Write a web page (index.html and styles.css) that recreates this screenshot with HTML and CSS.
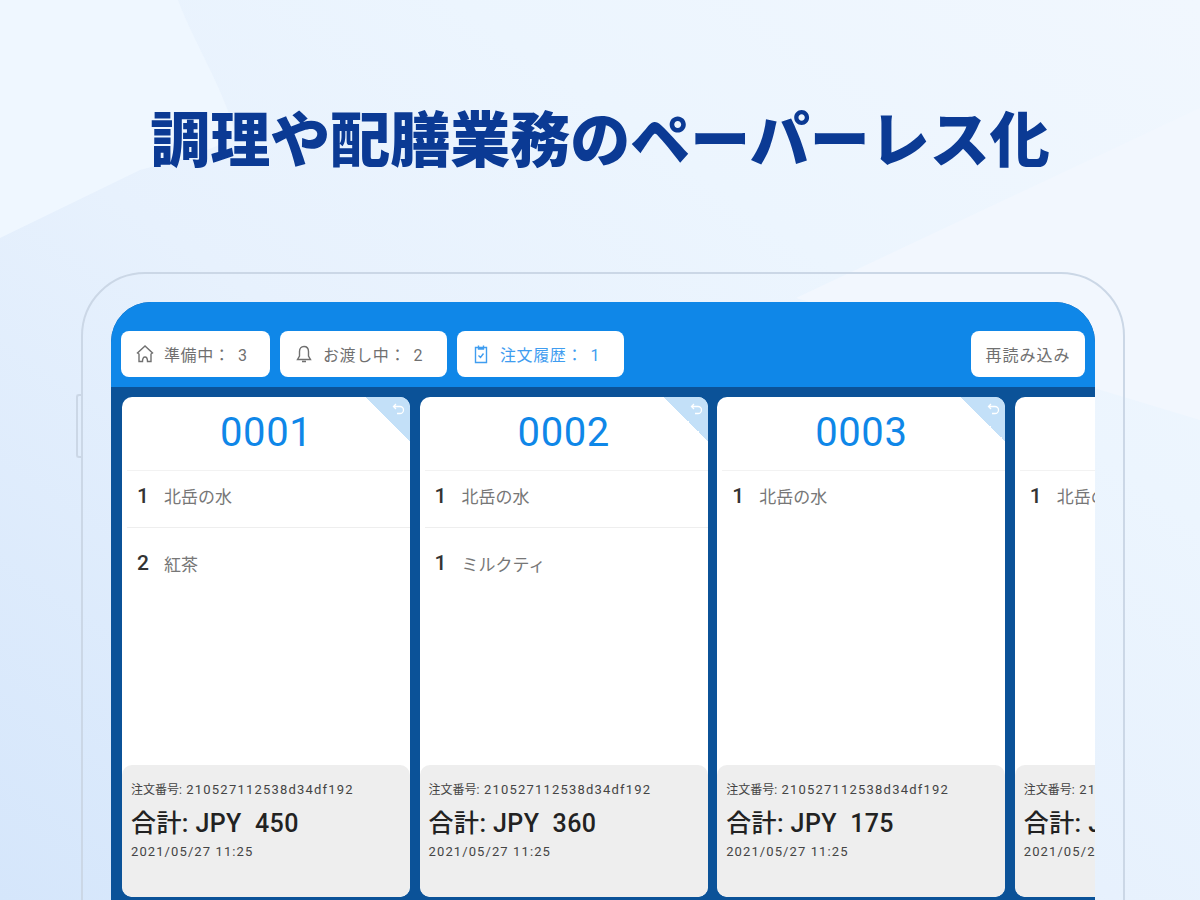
FILE: index.html
```html
<html lang="ja">
<head>
	<meta charset="utf-8">
	<link rel="stylesheet" href="styles.css">
</head>
<body>
	<svg class="backdrop" viewBox="0 0 1200 900" aria-hidden="true">
		<path d="M0 238 L140 170 C180 160 215 150 236 135 C222 85 195 45 178 0 L0 0 Z" fill="#eff7ff"/>
		<path d="M1200 108 L796 298 L1200 420 Z" fill="#f2f7fe"/>
	</svg>

	<h1 class="headline">調理や配膳業務のペーパーレス化</h1>

	<div class="tablet">
		<span class="side-button"></span>
		<div class="screen">
			<div class="toolbar">
				<button class="tab tab-prep">
					<svg class="tab-icon" viewBox="0 0 20 20"><path d="M10 2 2.500 9l1.500 1V17.500h3.500c0-3 1-4.500 2.500-4.500s2.500 1.500 2.500 4.500H16V10l1.500-1z"/></svg>
					<span>準備中： 3</span>
				</button>
				<button class="tab tab-hand">
					<svg class="tab-icon" viewBox="0 0 20 20"><path d="M10 2.500c-3 0-4.500 2.300-4.500 5v4.500L3.500 15.500h13l-2-3.500V7.500c0-2.700-1.500-5-4.500-5zM8 17.500h4"/></svg>
					<span>お渡し中： 2</span>
				</button>
				<button class="tab tab-history">
					<svg class="tab-icon" viewBox="0 0 20 20"><path d="M4.500 3.500h11v15h-11zM7.500 1.500v3.500h5V1.500M7.500 11.500l2 2 3-4"/></svg>
					<span>注文履歴： 1</span>
				</button>
				<button class="tab tab-reload">再読み込み</button>
			</div>

			<div class="board">
				<div class="order">
					<div class="order-no">0001</div>
					<span class="fold"><svg viewBox="0 0 14 14"><path d="M4 2 1.500 4.500 4 7M2 4.500h6a3.500 3.500 0 0 1 0 7H5"/></svg></span>
					<div class="item"><b>1</b><span>北岳の水</span></div>
					<div class="item"><b>2</b><span>紅茶</span></div>
					<div class="order-foot">
						<div class="order-id"><i>注文番号:</i> 210527112538d34df192</div>
						<div class="order-total">合計: JPY&nbsp; 450</div>
						<div class="order-date">2021/05/27 11:25</div>
					</div>
				</div>
				<div class="order">
					<div class="order-no">0002</div>
					<span class="fold"><svg viewBox="0 0 14 14"><path d="M4 2 1.500 4.500 4 7M2 4.500h6a3.500 3.500 0 0 1 0 7H5"/></svg></span>
					<div class="item"><b>1</b><span>北岳の水</span></div>
					<div class="item"><b>1</b><span>ミルクティ</span></div>
					<div class="order-foot">
						<div class="order-id"><i>注文番号:</i> 210527112538d34df192</div>
						<div class="order-total">合計: JPY&nbsp; 360</div>
						<div class="order-date">2021/05/27 11:25</div>
					</div>
				</div>
				<div class="order">
					<div class="order-no">0003</div>
					<span class="fold"><svg viewBox="0 0 14 14"><path d="M4 2 1.500 4.500 4 7M2 4.500h6a3.500 3.500 0 0 1 0 7H5"/></svg></span>
					<div class="item"><b>1</b><span>北岳の水</span></div>
					<div class="order-foot">
						<div class="order-id"><i>注文番号:</i> 210527112538d34df192</div>
						<div class="order-total">合計: JPY&nbsp; 175</div>
						<div class="order-date">2021/05/27 11:25</div>
					</div>
				</div>
				<div class="order">
					<div class="order-no">0004</div>
					<span class="fold"><svg viewBox="0 0 14 14"><path d="M4 2 1.500 4.500 4 7M2 4.500h6a3.500 3.500 0 0 1 0 7H5"/></svg></span>
					<div class="item"><b>1</b><span>北岳の水</span></div>
					<div class="order-foot">
						<div class="order-id"><i>注文番号:</i> 210527112538d34df192</div>
						<div class="order-total">合計: JPY&nbsp; 175</div>
						<div class="order-date">2021/05/27 11:25</div>
					</div>
				</div>
			</div>
		</div>
	</div>
</body>
</html>
```

FILE: styles.css
```css
html, body {
	margin: 0;
	height: 900px;
	overflow: hidden;
}
body {
	position: relative;
	background: linear-gradient(35deg, #d5e6fb 0%, #e7f1fd 45%, #ecf5fe 70%, #f1f7fe 100%);
	font-family: Roboto, "Noto Sans CJK JP", sans-serif;
	color: #555;
}

.backdrop {
	position: absolute;
	left: 0;
	top: 0;
	width: 1200px;
	height: 900px;
}

.headline {
	position: relative;
	margin: 0;
	padding-top: 93px;
	height: 176px;
	line-height: 86px;
	box-sizing: border-box;
	text-align: center;
	font-family: "Noto Sans CJK JP", sans-serif;
	font-size: 60px;
	font-weight: 900;
	color: #0b3a94;
	white-space: nowrap;
}

.tablet {
	position: relative;
	box-sizing: border-box;
	width: 1044px;
	height: 760px;
	margin: 96px 0 0 81px;
	padding: 28px 28px 0;
	border: 2px solid #cbd7e6;
	border-radius: 64px;
}
.side-button {
	position: absolute;
	left: -7px;
	top: 120px;
	width: 4px;
	height: 60px;
	border: 2px solid #cbd7e6;
	border-right: 0;
	border-radius: 3px 0 0 3px;
}

.screen {
	width: 984px;
	height: 640px;
	overflow: hidden;
	border-radius: 40px 40px 0 0;
	background: #0b5298;
}

.toolbar {
	display: flex;
	gap: 10px;
	height: 85px;
	box-sizing: border-box;
	padding: 29px 10px 10px;
	background: #0f87e8;
}
.tab {
	display: flex;
	align-items: center;
	gap: 9px;
	height: 46px;
	padding: 0 0 0 14px;
	border: 0;
	border-radius: 8px;
	background: #fff;
	font-family: inherit;
	font-size: 16px;
	letter-spacing: 0.6px;
	word-spacing: 3px;
	color: #707070;
}
.tab-prep { width: 149px; }
.tab-hand { width: 167px; }
.tab-history { width: 167px; color: #3f9df0; }
.tab-reload {
	width: 114px;
	margin-left: auto;
	justify-content: center;
	padding: 0;
	letter-spacing: 1px;
}
.tab-icon {
	width: 20px;
	height: 20px;
	fill: none;
	stroke: currentColor;
	stroke-width: 1.4;
}

.board {
	display: flex;
	gap: 9.300px;
	height: 510px;
	padding: 10px 11px 0;
}
.order {
	position: relative;
	flex: 0 0 288.300px;
	display: flex;
	flex-direction: column;
	height: 500px;
	overflow: hidden;
	border-radius: 10px;
	background: #fff;
}
.order-no {
	height: 73px;
	line-height: 72px;
	text-align: center;
	font-size: 40px;
	letter-spacing: 0.6px;
	color: #0f87e8;
}
.fold {
	position: absolute;
	right: 0;
	top: 0;
	width: 44px;
	height: 44px;
	background: linear-gradient(to top right, transparent 50%, #c3e0f8 50%);
}
.fold svg {
	position: absolute;
	right: 4px;
	top: 5px;
	width: 14px;
	height: 14px;
	fill: none;
	stroke: #fff;
	stroke-width: 1.3;
}

.item {
	display: flex;
	align-items: center;
	height: 29px;
	margin-left: 5px;
	padding: 10px 10px 17px;
	border-top: 1px solid #f2f2f2;
	font-size: 17px;
	color: #777;
}
.item + .item {
	height: 34px;
	padding-top: 18px;
	border-top-color: #eee;
}
.item b {
	width: 27px;
	font-size: 21px;
	font-weight: 500;
	color: #333;
}

.order-foot {
	margin-top: auto;
	height: 132px;
	box-sizing: border-box;
	padding: 16px 9px 0;
	border-radius: 10px;
	background: #eee;
	color: #444;
}
.order-id {
	font-size: 13px;
	letter-spacing: 1.200px;
	line-height: 18px;
	white-space: nowrap;
}
.order-id i {
	font-style: normal;
	font-size: 12px;
	letter-spacing: 0;
}
.order-total {
	margin-top: 8px;
	font-size: 25px;
	font-weight: 500;
	line-height: 34px;
	letter-spacing: 0.4px;
	color: #222;
	white-space: nowrap;
}
.order-date {
	margin-top: 2px;
	font-size: 13px;
	letter-spacing: 1.100px;
	line-height: 18px;
}
```
